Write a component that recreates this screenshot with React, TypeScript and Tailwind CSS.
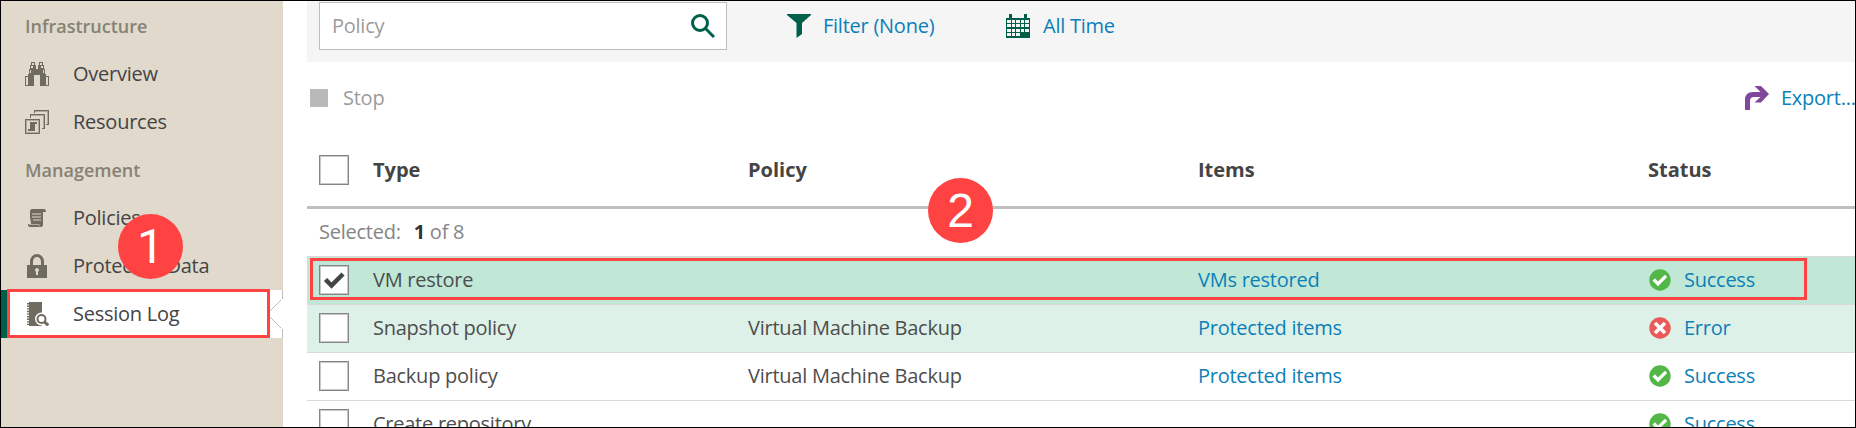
import React from "react";

const SIDE = "#706b61";
const GREEN = "#005f4b";

function Binoculars() {
  return (
    <svg className="shrink-0" width="24" height="24" viewBox="0 0 24 24" fill={SIDE} shapeRendering="crispEdges">
      <path fillRule="evenodd" d="M6 0h4v3h1v4h2V3h1V0h4v3h1v4h1v5h1v2h3v10h-9V13h-6v11H0V14h3v-2h1V7h1V3h1zM7 1v2h2V1zM15 1v2h2V1zM6 4v2h2V4zM16 4v2h2V4zM5 8v3h1V8zM18 8v3h1V8zM1 15v8h2v-8zM21 15v8h2v-8z" />
    </svg>
  );
}

function Stack() {
  return (
    <svg className="shrink-0" width="24" height="24" viewBox="0 0 24 24" fill={SIDE} shapeRendering="crispEdges">
      <path d="M9 0h15v15h-3v-1h2V1H10v2H9z" />
      <path d="M5 4h15v15h-3v-1h2V5H6v3H5z" />
      <path fillRule="evenodd" d="M0 9h15v15H0zM1 10v13h13V10z" />
      <path d="M5 12h7v2h-2v7H3v-2h2z" />
      <path opacity=".45" d="M10 1h13v1H10zM22 2h1v12h-1zM6 5h13v1H6zM18 6h1v12h-1zM1 10h13v1H1zM1 22h13v1H1zM1 11h1v11H1zM13 11h1v11h-1z" />
    </svg>
  );
}

function Scroll() {
  return (
    <svg className="shrink-0" width="24" height="24" viewBox="0 0 24 24" fill={SIDE}>
      <path fillRule="evenodd" d="M7 3h12q2 0 2 3h-3v13l-1 2H5q-2 0-2-3h3q0-2-1-6V6q0-3 2-3zM7 7.500v1h9v-1zM7 10.500v1h9v-1zM8 13.500v1h8v-1z" />
      <path d="M4 18.500h10l1 2" fill="none" stroke="#e0d9cc" strokeWidth=".6" />
    </svg>
  );
}

function Lock() {
  return (
    <svg className="shrink-0" width="24" height="24" viewBox="0 0 24 24">
      <path d="M6.500 12V7.500a5.500 6 0 0 1 11 0V12" fill="none" stroke={SIDE} strokeWidth="3" />
      <path fill={SIDE} fillRule="evenodd" d="M2 11h20v13H2zM12 14a2 2 0 0 0-1 3.700V21h2v-3.300A2 2 0 0 0 12 14z" />
    </svg>
  );
}

function LogIcon() {
  return (
    <svg className="shrink-0" width="24" height="24" viewBox="0 0 24 24">
      <path fill={SIDE} d="M4 0h13v24H4z" />
      <path d="M3.500 1v22" stroke={SIDE} strokeWidth="3" strokeDasharray="1.400 1.200" />
      <circle cx="16.500" cy="17" r="6.500" fill="#fff" />
      <path d="M16 17l8 7" stroke="#fff" strokeWidth="5" />
      <circle cx="16.500" cy="17" r="4" fill="none" stroke={SIDE} strokeWidth="2" />
      <path d="M19.500 20l3.800 3.300" stroke={SIDE} strokeWidth="3" />
    </svg>
  );
}

function SearchIcon() {
  return (
    <svg className="shrink-0" width="24" height="24" viewBox="0 0 24 24" fill="none" stroke={GREEN} strokeWidth="3">
      <circle cx="9" cy="9" r="7.500" />
      <path d="M14.500 14.500L23 23" />
    </svg>
  );
}

function Funnel() {
  return (
    <svg className="shrink-0" width="24" height="24" viewBox="0 0 24 24" fill={GREEN}>
      <path d="M0 0h24v1L15 9v11l-5.500 4V9L0 1z" />
    </svg>
  );
}

function CalendarIcon() {
  return (
    <svg className="shrink-0" width="24" height="24" viewBox="0 0 24 24" shapeRendering="crispEdges">
      <path fill={GREEN} d="M3 0h3v4h12V0h3v4h3v20H0V4h3z" />
      <path
        fill="#f5f5f5"
        d="M1 6h4v3H1zM6 6h3v3H6zM10 6h4v3h-4zM15 6h3v3h-3zM19 6h4v3h-4zM1 10h4v3H1zM6 10h3v3H6zM10 10h4v3h-4zM15 10h3v3h-3zM19 10h4v3h-4zM1 15h4v3H1zM6 15h3v3H6zM10 15h4v3h-4zM15 15h3v3h-3zM19 15h4v3h-4zM1 19h4v3H1zM6 19h3v3H6zM10 19h4v3h-4z"
      />
    </svg>
  );
}

function ExportIcon() {
  return (
    <svg className="shrink-0" width="24" height="24" viewBox="0 0 24 24" fill="#80479a">
      <path d="M0 24V14Q0 6 8 6h7.500L9.500 0h6.500l8 8-8 8.500H9.500l6-5.500H9q-4 0-4 4v9z" />
    </svg>
  );
}

function StatusIcon({ ok }: { ok: boolean }) {
  return (
    <svg className="shrink-0" width="22" height="22" viewBox="0 0 22 22" fill="none" stroke="#fff">
      <circle cx="11" cy="11" r="10.700" fill={ok ? "#53b748" : "#ea5a5a"} stroke="none" />
      {ok ? <path d="M4.700 10.500l4.300 4.300 8-8" strokeWidth="3.300" /> : <path d="M6 6l10 10M16 6L6 16" strokeWidth="3.500" />}
    </svg>
  );
}

function Checkbox({ checked = false }: { checked?: boolean }) {
  return (
    <span className="flex size-[30px] shrink-0 items-center justify-center border border-[#858585] bg-white shadow-[inset_0_0_0_1px_#c8c8c8]">
      {checked && (
        <svg width="22" height="18" viewBox="0 0 22 18" fill="none" stroke="#444" strokeWidth="4.500">
          <path d="M2.500 8.500l6 6L20 3" />
        </svg>
      )}
    </span>
  );
}

function NavItem({ icon, label }: { icon: React.ReactNode; label: string }) {
  return (
    <li className="flex h-12 items-center pl-6 text-[#444]">
      {icon}
      <span className="ml-6 pb-0.5">{label}</span>
    </li>
  );
}

function Marker({ n, place }: { n: number; place: string }) {
  return (
    <span
      className={`absolute flex size-[65px] items-center justify-center rounded-full bg-[#ff4343] text-[48px] leading-none tracking-normal text-white ${place}`}
    >
      {n}
    </span>
  );
}

const rows = [
  { type: "VM restore", policy: "", items: "VMs restored", status: "Success", bg: "bg-[#c1e8d7]", checked: true },
  { type: "Snapshot policy", policy: "Virtual Machine Backup", items: "Protected items", status: "Error", bg: "bg-[#def1e8]" },
  { type: "Backup policy", policy: "Virtual Machine Backup", items: "Protected items", status: "Success", bg: "bg-white" },
  { type: "Create repository", policy: "", items: "", status: "Success", bg: "bg-white" },
];

const grid = "grid shrink-0 grid-cols-[54px_375px_450px_450px_1fr] items-center pl-3";

export default function App() {
  return (
    <div className="relative flex h-[428px] w-[1856px] overflow-hidden bg-white font-['Open_Sans',sans-serif] text-[20px] leading-[27px] tracking-[-0.25px] whitespace-nowrap text-[#4d4d4d]">
      <nav className="w-[283px] shrink-0 bg-[#e0d9cc] pt-0.5 pl-px">
        <h2 className="flex h-12 items-center pl-6 text-[18px] font-semibold tracking-normal text-[#868275]">Infrastructure</h2>
        <ul>
          <NavItem icon={<Binoculars />} label="Overview" />
          <NavItem icon={<Stack />} label="Resources" />
        </ul>
        <h2 className="flex h-12 items-center pl-6 text-[18px] font-semibold tracking-normal text-[#868275]">Management</h2>
        <ul>
          <NavItem icon={<Scroll />} label="Policies" />
          <NavItem icon={<Lock />} label="Protected Data" />
          <li className="flex h-12 items-center border-l-[6px] border-[#005f4b] bg-white pl-[18px] text-[#444]">
            <LogIcon />
            <span className="ml-6 pb-0.5">Session Log</span>
            <svg className="ml-auto" width="18" height="48" viewBox="0 0 18 48" fill="none" stroke="#bdbdbd">
              <path d="M17.500 0v9M16 10L2 24l14 14M17.500 39v9" />
            </svg>
          </li>
        </ul>
      </nav>

      <main className="ml-6 flex w-[1549px] shrink-0 flex-col">
        <div className="flex h-[62px] shrink-0 items-start bg-[#f5f5f5] pt-0.5 pl-3">
          <div className="flex h-12 w-[408px] items-center justify-between border border-[#bdbdbd] bg-white pr-[11px] pl-3 text-[#9b9b9b]">
            <span className="pb-0.5">Policy</span>
            <SearchIcon />
          </div>
          <div className="ml-[60px] flex h-12 items-center gap-3 text-[#0b7fb8]">
            <Funnel />
            <span className="w-[183px] pb-0.5">Filter (None)</span>
          </div>
          <div className="flex h-12 items-center gap-[13px] text-[#0b7fb8]">
            <CalendarIcon />
            <span className="pb-0.5">All Time</span>
          </div>
        </div>

        <div className="flex h-[72px] shrink-0 items-center pl-[3px]">
          <span className="size-[18px] bg-[#b9b9b9]" />
          <span className="ml-[15px] pb-0.5 text-[#9b9b9b]">Stop</span>
          <div className="ml-auto flex w-[111px] items-center gap-3 text-[#0b7fb8]">
            <ExportIcon />
            <span className="pb-0.5">Export...</span>
          </div>
        </div>

        <div className={`${grid} h-[75px] border-b-[3px] border-[#c0c0c0] font-bold tracking-normal text-[#444]`}>
          <Checkbox />
          <span className="pb-0.5">Type</span>
          <span className="pb-0.5">Policy</span>
          <span className="pb-0.5">Items</span>
          <span className="pb-0.5">Status</span>
        </div>

        <div className="flex h-[47px] shrink-0 items-center pb-0.5 pl-3 text-[#858585]">
          <span>Selected:</span>
          <b className="ml-[13px] text-[#333]">1</b>
          <span className="ml-[5px]">of 8</span>
        </div>

        {rows.map((r) => (
          <div key={r.type} className={`${grid} h-12 border-t border-[#d9d9d9] pb-px ${r.bg}`}>
            <Checkbox checked={r.checked} />
            <span className="pb-0.5">{r.type}</span>
            <span className="pb-0.5">{r.policy}</span>
            <span className="pb-0.5 text-[#0b7fb8]">{r.items}</span>
            <span className="flex items-center gap-[13px] pl-px text-[#0b7fb8]">
              <StatusIcon ok={r.status === "Success"} />
              <span className="pb-0.5">{r.status}</span>
            </span>
          </div>
        ))}
      </main>

      <div className="absolute top-[289px] left-[7px] h-[49px] w-[263px] border-3 border-[#ff4343]" />
      <div className="absolute top-[258px] left-[310px] h-[42px] w-[1497px] border-3 border-[#ff4343]" />
      <Marker n={1} place="top-[214px] left-[118px] font-['Roboto',sans-serif]" />
      <Marker n={2} place="top-[178px] left-[928px] font-['Liberation_Sans',sans-serif]" />
      <div className="absolute inset-0 border border-black" />
    </div>
  );
}
